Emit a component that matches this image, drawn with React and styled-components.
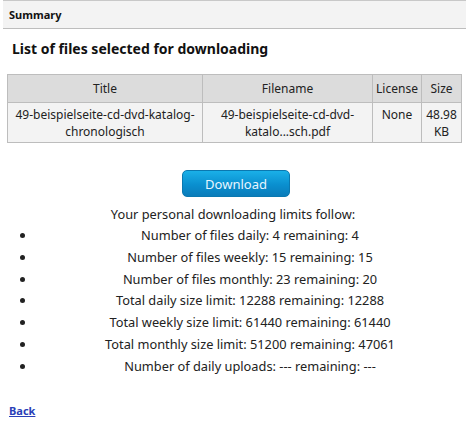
import React from "react";
import styled, { createGlobalStyle } from "styled-components";

const Global = createGlobalStyle`
  html, body { margin: 0; padding: 0; background: #fff; }
  body { font-family: "Noto Sans", "Open Sans", sans-serif; color: #222; }
`;

const Page = styled.div`
  width: 466px;
  padding: 0;
  box-sizing: border-box;
`;

const Header = styled.div`
  margin: 0 0 0 3px;
  height: 27px;
  background: #f3f3f3;
  border-top: 1px solid #c8c8c8;
  border-bottom: 1px solid #bdbdbd;
  display: flex;
  align-items: center;
  padding-left: 6px;
  font-size: 11px;
  font-weight: bold;
  color: #111;
`;

const Heading = styled.h2`
  margin: 10px 0 0 12px;
  font-size: 14px;
  font-weight: bold;
  color: #111;
  line-height: 20px;
`;

const Table = styled.table`
  margin: 15px 0 0 7px;
  width: 454px;
  table-layout: fixed;
  border-collapse: collapse;
  font-size: 12px;
  color: #222;
`;

const Th = styled.th`
  background: #dcdcdc;
  border: 1px solid #bdbdbd;
  font-weight: normal;
  height: 27px;
  padding: 0 1px;
  text-align: center;
  width: ${(p) => p.$w}px;
`;

const Td = styled.td`
  background: #f3f3f3;
  border: 1px solid #bdbdbd;
  text-align: center;
  vertical-align: top;
  padding: 3px 1px 2px;
  line-height: 17px;
`;

const ButtonRow = styled.div`
  display: flex;
  justify-content: center;
  margin-top: 27px;
  padding-left: 6px;
`;

const Button = styled.button`
  width: 108px;
  height: 27px;
  border-radius: 5px;
  border: 1px solid #0a78b0;
  background: linear-gradient(#1ab0e8, #0a8fcf 55%, #0a7cba);
  color: #e8f6ff;
  font-family: inherit;
  font-size: 13px;
  cursor: pointer;
  padding: 0;
`;

const Intro = styled.div`
  text-align: center;
  font-size: 12.8px;
  line-height: 22px;
  margin-top: 6px;
`;

const List = styled.ul`
  margin: 0;
  padding: 0 2px 0 36px;
  font-size: 12.8px;
  line-height: 21.8px;
  text-align: center;
`;

const Item = styled.li``;

const Back = styled.a`
  display: inline-block;
  margin: 25px 0 0 9px;
  font-size: 11px;
  font-weight: bold;
  color: #2a3fb8;
  text-decoration: underline;
`;

const limits = [
  "Number of files daily: 4 remaining: 4",
  "Number of files weekly: 15 remaining: 15",
  "Number of files monthly: 23 remaining: 20",
  "Total daily size limit: 12288 remaining: 12288",
  "Total weekly size limit: 61440 remaining: 61440",
  "Total monthly size limit: 51200 remaining: 47061",
  "Number of daily uploads: --- remaining: ---",
];

export default function App() {
  return (
    <Page>
      <Global />
      <Header>Summary</Header>
      <Heading>List of files selected for downloading</Heading>
      <Table>
        <thead>
          <tr>
            <Th $w={192}>Title</Th>
            <Th $w={167}>Filename</Th>
            <Th $w={46}>License</Th>
            <Th $w={37}>Size</Th>
          </tr>
        </thead>
        <tbody>
          <tr>
            <Td>49-beispielseite-cd-dvd-katalog-chronologisch</Td>
            <Td>49-beispielseite-cd-dvd-katalo...sch.pdf</Td>
            <Td>None</Td>
            <Td>48.98 KB</Td>
          </tr>
        </tbody>
      </Table>
      <ButtonRow>
        <Button>Download</Button>
      </ButtonRow>
      <Intro>Your personal downloading limits follow:</Intro>
      <List>
        {limits.map((l) => (
          <Item key={l}>{l}</Item>
        ))}
      </List>
      <Back href="#">Back</Back>
    </Page>
  );
}
